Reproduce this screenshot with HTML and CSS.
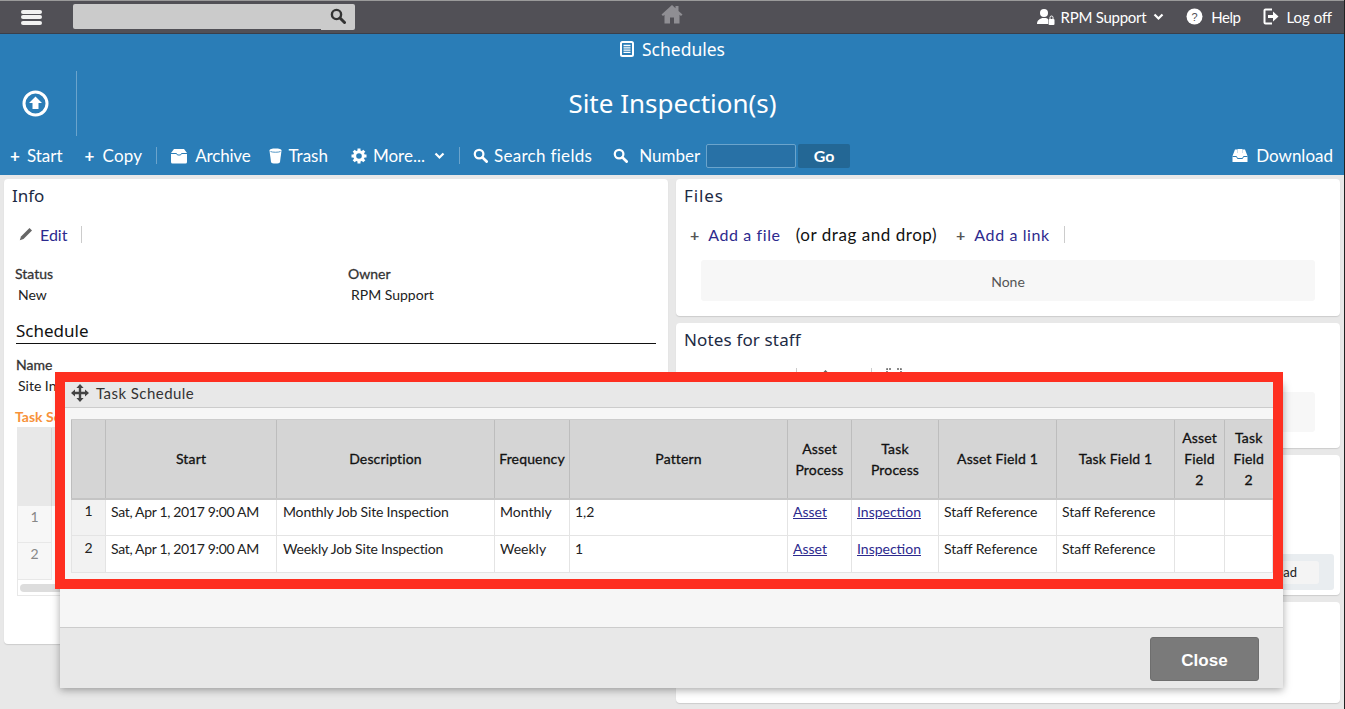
FILE: index.html
```html
<!DOCTYPE html>
<html lang="en">
<head>
<meta charset="utf-8">
<title>Site Inspection(s)</title>
<link rel="stylesheet" href="styles.css">
</head>
<body>
<header class="topbar">
  <button class="burger" aria-label="Menu"><span></span><span></span><span></span></button>
  <div class="searchbox">
    <div class="searchfield"></div>
    <div class="searchbtn"><svg width="16" height="16" viewBox="0 0 16 16"><circle cx="6.5" cy="6.5" r="4.6" fill="none" stroke="#333" stroke-width="2.4"/><path d="M10 10l4.5 4.5" stroke="#333" stroke-width="3" stroke-linecap="round"/></svg></div>
  </div>
  <div class="homewrap"><svg width="22" height="20" viewBox="0 0 22 20"><path d="M11 1 0.5 10.5 2 12l1.5-1.3V19.5h5.5v-6h4v6h5.500V10.700L20 12l1.500-1.500L17.500 7V2h-3v2.300z" fill="#8f8e93"/></svg></div>
  <nav class="usernav">
    <span class="navitem user"><svg width="18" height="18" viewBox="0 0 18 18"><circle cx="7" cy="5" r="4" fill="#fff"/><path d="M0 16c0-4 3-5 5-6h4c1 .3 1.500.7 2 1v5z" fill="#fff"/><rect x="11.500" y="11" width="6" height="6" rx="1" fill="#fff"/><path d="M13 11V9.500a1.500 1.500 0 0 1 3 0V11" fill="none" stroke="#fff"/></svg><span class="navtext">RPM Support</span><svg class="chev" width="11" height="8" viewBox="0 0 11 8"><path d="M1.500 1.500 5.500 5.500 9.500 1.500" fill="none" stroke="#fff" stroke-width="2.200"/></svg></span>
    <span class="navitem help"><svg width="17" height="17" viewBox="0 0 17 17"><circle cx="8.500" cy="8.500" r="8" fill="#fff"/><text x="8.500" y="12.500" class="qmark">?</text></svg><span class="navtext">Help</span></span>
    <span class="navitem logoff"><svg width="16" height="17" viewBox="0 0 16 17"><path d="M9 1.500H2.500a1 1 0 0 0-1 1v12a1 1 0 0 0 1 1H9" fill="none" stroke="#fff" stroke-width="2"/><path d="M5 7h5V3.500L15.500 8.500 10 13.500V10H5z" fill="#fff"/></svg>Log off</span>
  </nav>
</header>

<section class="band">
  <div class="crumb"><svg width="14" height="16" viewBox="0 0 14 16"><rect x="1" y="1" width="12" height="14" rx="1.500" fill="none" stroke="#fff" stroke-width="2"/><path d="M3.500 4.500h7M3.500 6.800h7M3.500 9.100h7M3.500 11.400h7" stroke="#fff" stroke-width="1.300"/></svg><span>Schedules</span></div>
  <div class="titlerow">
    <div class="upcell"><svg width="27" height="27" viewBox="0 0 27 27"><circle cx="13.500" cy="13.500" r="11.500" fill="none" stroke="#fff" stroke-width="3"/><path d="M13.500 6.500 20 13h-3.500v6h-6v-6H7z" fill="#fff"/></svg></div>
    <h1>Site Inspection(s)</h1>
  </div>
  <div class="toolbar">
    <span class="tool t-start"><b class="plus">+</b>Start</span>
    <span class="tool t-copy"><b class="plus">+</b>Copy</span>
    <i class="tsep"></i>
    <span class="tool t-archive"><svg width="18" height="16" viewBox="0 0 18 16"><path d="M4 1h10l3 4v9a1.500 1.500 0 0 1-1.500 1.500h-13A1.500 1.500 0 0 1 1 14V5z" fill="#fff"/><path d="M1 5.500h5.500l1 1.500h3l1-1.500H17" fill="none" stroke="#2a7db7"/></svg>Archive</span>
    <span class="tool t-trash"><svg width="13" height="16" viewBox="0 0 13 16"><path d="M.5 2.500C.5 1 3 .5 6.500.5s6 .5 6 2L11 14c-.2 1-2 1.500-4.500 1.500S2.200 15 2 14z" fill="#fff"/><path d="M1.500 3.500c2 1 8 1 10 0" fill="none" stroke="#2a7db7" stroke-width=".8"/></svg>Trash</span>
    <span class="tool t-more"><svg width="16" height="16" viewBox="0 0 16 16"><circle cx="8" cy="8" r="4.300" fill="none" stroke="#fff" stroke-width="3"/><path d="M8 0.500v3M8 12.500v3M.5 8h3M12.500 8h3M2.700 2.700l2.100 2.100M11.200 11.200l2.100 2.100M2.700 13.300l2.100-2.100M11.200 4.800l2.100-2.100" stroke="#fff" stroke-width="3"/></svg>More...<svg class="chev" width="11" height="8" viewBox="0 0 11 8"><path d="M1.500 1.500 5.500 5.500 9.500 1.500" fill="none" stroke="#fff" stroke-width="2.200"/></svg></span>
    <i class="tsep t-sep2"></i>
    <span class="tool t-sf"><svg width="15" height="15" viewBox="0 0 16 16"><circle cx="6.500" cy="6.500" r="4.600" fill="none" stroke="#fff" stroke-width="2.400"/><path d="M10 10l4.500 4.500" stroke="#fff" stroke-width="3" stroke-linecap="round"/></svg>Search fields</span>
    <span class="tool t-num"><svg width="15" height="15" viewBox="0 0 16 16"><circle cx="6.500" cy="6.500" r="4.600" fill="none" stroke="#fff" stroke-width="2.400"/><path d="M10 10l4.500 4.500" stroke="#fff" stroke-width="3" stroke-linecap="round"/></svg>Number</span>
    <div class="numinput"></div>
    <div class="gobtn">Go</div>
    <span class="tool t-dl"><svg width="16" height="15" viewBox="0 0 16 15"><path d="M3 1.500h2.500V5h5V1.500H13l2.500 6.500v6H.5V8z" fill="#fff"/><path d="M.5 8.500h4l1 2h5l1-2h4" fill="none" stroke="#2a7db7" stroke-width="1"/><path d="M5.500 1h5v4.500H13L8 9.500 3 5.500h2.500z" fill="#fff"/></svg>Download</span>
  </div>
</section>

<main class="content">
  <article class="card card-info">
    <h2>Info</h2>
    <div class="actions act-info">
      <svg width="14" height="14" viewBox="0 0 14 14"><path d="M10.500 1 13 3.500 4.500 12 .8 13.200 2 9.500z" fill="#666"/></svg>
      <a class="act">Edit</a><i class="asep"></i>
    </div>
    <div class="fields">
      <div><div class="flabel">Status</div><div class="fvalue">New</div></div>
      <div><div class="flabel">Owner</div><div class="fvalue">RPM Support</div></div>
    </div>
    <h3>Schedule</h3>
    <div class="flabel name">Name</div>
    <div class="fvalue nameval">Site Inspection(s)</div>
    <div class="tasklabel">Task Schedule</div>
    <div class="subtable">
      <div class="subhead"><div class="subcorner"></div></div>
      <div class="subrow"><span>1</span></div>
      <div class="subrow"><span>2</span></div>
      <div class="subscroll"><div class="thumb"></div></div>
    </div>
  </article>
  <div class="rightcol">
    <article class="card card-files">
      <h2>Files</h2>
      <div class="actions act-files">
        <span class="gplus">+</span><a class="act">Add a file</a>
        <span class="drag">(or drag and drop)</span>
        <span class="gplus second">+</span><a class="act">Add a link</a><i class="asep"></i>
      </div>
      <div class="nonebox">None</div>
    </article>
    <article class="card card-notes">
      <h2>Notes for staff</h2>
      <div class="actions act-notes">
        <span class="gplus">+</span><a class="act">Add item</a><svg class="nchev" width="10" height="8" viewBox="0 0 10 8"><path d="M1 1.500 5 5.500 9 1.500" fill="none" stroke="#777" stroke-width="2"/></svg><i class="asep one"></i>
        <svg class="npen" width="14" height="14" viewBox="0 0 14 14"><path d="M10.500 1 13 3.500 4.500 12 .8 13.200 2 9.500z" fill="#666"/></svg><a class="act">Edit</a><i class="asep two"></i>
        <svg class="nexp" width="16" height="16" viewBox="0 0 16 16"><path d="M1 5V1h4M11 1h4v4M15 11v4h-4M5 15H1v-4" fill="none" stroke="#666" stroke-width="1.500" stroke-dasharray="2 1"/></svg><a class="act">Expand</a>
      </div>
      <div class="notebox"></div>
    </article>
    <article class="card card-third">
      <div class="uploadstrip"><span class="uploadbtn">Upload</span></div>
    </article>
    <article class="card card-fourth"></article>
  </div>
</main>

<div class="modal">
  <div class="modalhead">
    <svg width="18" height="18" viewBox="0 0 18 18"><path d="M9 3v12M3 9h12" stroke="#444" stroke-width="2.400"/><path d="M9 0l3.600 4H5.400zM9 18l3.600-4H5.400zM0 9l4-3.600v7.200zM18 9l-4-3.600v7.200z" fill="#444"/></svg>
    <span>Task Schedule</span>
  </div>
  <div class="modalbody">
    <table class="grid">
      <colgroup><col class="c0"><col class="c1"><col class="c2"><col class="c3"><col class="c4"><col class="c5"><col class="c6"><col class="c7"><col class="c8"><col class="c9"><col class="c10"></colgroup>
      <thead>
        <tr><th></th><th>Start</th><th>Description</th><th>Frequency</th><th>Pattern</th><th>Asset<br>Process</th><th>Task<br>Process</th><th>Asset Field 1</th><th>Task Field 1</th><th>Asset Field 2</th><th>Task Field 2</th></tr>
      </thead>
      <tbody>
        <tr><td class="num">1</td><td class="date">Sat, Apr 1, 2017 9:00 AM</td><td class="desc">Monthly Job Site Inspection</td><td>Monthly</td><td>1,2</td><td><a>Asset</a></td><td><a>Inspection</a></td><td>Staff Reference</td><td>Staff Reference</td><td></td><td></td></tr>
        <tr><td class="num">2</td><td class="date">Sat, Apr 1, 2017 9:00 AM</td><td class="desc">Weekly Job Site Inspection</td><td>Weekly</td><td>1</td><td><a>Asset</a></td><td><a>Inspection</a></td><td>Staff Reference</td><td>Staff Reference</td><td></td><td></td></tr>
      </tbody>
    </table>
  </div>
  <div class="modalfoot"><button class="closebtn">Close</button></div>
</div>
<div class="redframe"></div>
</body>
</html>
```
FILE: styles.css
```css
* { box-sizing: border-box; }
html, body { margin: 0; height: 709px; overflow: hidden; }
body { background: #e8e8e8; font-family: Lato, "Liberation Sans", sans-serif; font-size: 14px; color: #222; position: relative; }
body::after { content: ""; position: absolute; right: 0; top: 0; bottom: 0; width: 1px; background: #222; }

/* top bar */
.topbar { height: 34px; background: #515056; border-top: 1px solid #9a9a9a; border-bottom: 1px solid #3a3f4a; display: flex; align-items: center; position: relative; color: #fff; }
.burger { width: 21px; height: 15px; margin-left: 21px; padding: 0; background: none; border: 0; display: flex; flex-direction: column; justify-content: space-between; }
.burger span { display: block; height: 4px; border-radius: 2px; background: #f2f2f2; }
.searchbox { margin-left: 31px; width: 282px; height: 26px; display: flex; }
.searchfield { flex: 1; height: 25px; background: #cbcbcb; border-radius: 2px 0 0 2px; }
.searchbtn { width: 34px; background: #cbcbcb; border-radius: 0 2px 2px 0; display: flex; align-items: center; justify-content: center; padding-bottom: 2px; }
.homewrap { position: absolute; left: 661px; top: 3px; line-height: 0; }
.usernav { margin-left: auto; margin-right: 13px; display: flex; align-items: center; font-size: 15px; padding-bottom: 1px; }
.navitem { display: flex; align-items: center; }
.navitem svg { margin-right: 6px; }
.navitem .chev { margin: 1px 0 0 7px; }
.user .navtext { letter-spacing: -.27px; }
.help { margin-left: 22px; }
.help svg { margin-right: 8px; }
.help .navtext { letter-spacing: -.5px; }
.logoff { margin-left: 23px; }
.logoff svg { margin-right: 7px; }
.qmark { font-size: 11px; fill: #515056; text-anchor: middle; font-family: "Liberation Sans", sans-serif; }

/* blue band */
.band { height: 141px; background: #2a7db7; color: #fff; display: flex; flex-direction: column; }
.crumb { height: 30px; display: flex; align-items: center; justify-content: center; gap: 8px; font: 17.500px "Noto Sans", sans-serif; }
.titlerow { height: 65px; margin-top: 7px; display: flex; align-items: center; position: relative; }
.upcell { width: 77px; height: 65px; border-right: 1px solid #6ba4cc; display: flex; align-items: center; justify-content: center; padding-right: 6px; }
.titlerow h1 { margin: 0 0 2px; position: absolute; left: 0; right: 0; text-align: center; font: 400 26px "Noto Sans", sans-serif; }
.toolbar { height: 39px; display: flex; align-items: center; font-size: 17px; padding: 0 12px 0 10px; }
.tool { display: flex; align-items: center; white-space: nowrap; }
.tool svg { margin-right: 8px; }
.plus { font-weight: 700; margin-right: 7px; }
.t-copy { margin-left: 22px; letter-spacing: .2px; }
.t-copy .plus { margin-right: 8px; }
.tsep { width: 1px; height: 17px; background: #6ba4cc; margin: 0 13px 0 14px; }
.t-archive svg { margin-right: 7px; }
.t-archive { letter-spacing: -.2px; }
.t-trash { margin-left: 19px; }
.t-trash svg { margin-right: 6px; }
.t-more { margin-left: 23px; }
.t-more svg { margin-right: 6px; }
.t-more .chev { margin: 1px 0 0 9px; }
.t-sep2 { margin: 0 13px 0 14px; }
.t-sf { letter-spacing: .3px; }
.t-sf svg { margin-right: 6px; }
.t-num { margin-left: 21px; }
.t-num svg { margin-right: 11px; }
.numinput { width: 90px; height: 24px; margin-left: 6px; background: #2871a6; border: 1px solid #6ba4cc; border-radius: 2px; }
.gobtn { width: 52px; height: 24px; margin-left: 2px; background: #236795; border-radius: 2px; display: flex; align-items: center; justify-content: center; font-size: 16px; font-weight: 700; }
.t-dl { margin-left: auto; }

/* content */
.content { display: flex; gap: 8px; padding: 4px 5px 0 4px; align-items: flex-start; }
.card { background: #fff; border-radius: 4px; box-shadow: 0 1px 1px #ccc; position: relative; }
.card h2 { margin: 0; font: 400 17px/24px "Noto Sans", sans-serif; color: #1c2a44; }
.card-files h2 { letter-spacing: .9px; }
.card-notes h2 { letter-spacing: .15px; }
.card-info { width: 664px; height: 465px; padding: 5px 8px; }
.rightcol { flex: 1; display: flex; flex-direction: column; gap: 7px; }
.card-files { height: 137px; padding: 5px 8px; }
.card-notes { height: 125px; padding: 5px 8px; }
.card-third { height: 140px; }
.card-fourth { height: 101px; }
.actions { display: flex; align-items: center; font-size: 16px; height: 22px; margin-top: 15px; }
.act { color: #2d2a8e; }
.asep { width: 1px; height: 17px; background: #ccc; margin-left: 14px; }
.act-info { padding-left: 7px; }
.act-info svg { margin-right: 7px; }
.act-files, .act-notes { padding-left: 6px; letter-spacing: .6px; }
.gplus { color: #555; font-weight: 700; margin-right: 9px; letter-spacing: 0; }
.drag { margin-left: 15px; color: #111; font-size: 17px; letter-spacing: .55px; }
.gplus.second { margin-left: 19px; }
.nonebox { margin: 15px 17px 0; height: 41px; padding-top: 2px; background: #f7f7f7; border-radius: 3px; display: flex; align-items: center; justify-content: center; font-size: 14px; color: #555; }
.act-notes { margin-top: 13px; }
.nchev { margin-left: 4px; }
.npen { margin: 0 6px 0 18px; }
.nexp { margin: 0 10px 0 14px; }
.asep.one { margin-left: 5px; }
.asep.two { margin-left: 6px; }
.notebox { position: absolute; left: 25px; right: 25px; top: 69px; height: 40px; background: #f7f7f7; border-radius: 3px; }
.uploadstrip { position: absolute; left: 25px; right: 6px; top: 99px; height: 36px; background: #e9edf0; border-radius: 3px; display: flex; justify-content: flex-end; align-items: center; padding-right: 15px; }
.uploadbtn { background: #f4f4f4; height: 23px; padding-right: 22px; line-height: 23px; border-radius: 3px; font-size: 13px; color: #222; width: 80px; text-align: right; }
.fields { display: grid; grid-template-columns: 333px 1fr; margin-top: 19px; padding-left: 3px; }
.flabel { font-size: 14px; color: #333; line-height: 20px; -webkit-text-stroke: .3px #333; }
.fvalue { font-size: 14px; color: #222; line-height: 20px; padding: 1px 0 0 3px; }
.card-info h3 { margin: 14px 0 0 4px; font: 400 17px/24px "Noto Sans", sans-serif; color: #111; border-bottom: 1px solid #111; width: 640px; }
.flabel.name { margin: 11px 0 0 4px; }
.nameval { margin-left: 3px; }
.tasklabel { margin: 11px 0 0 3px; color: #f7923a; font-weight: 700; font-size: 14px; line-height: 20px; }
.subtable { margin: 0 0 0 5px; width: 640px; height: 169px; border: 1px solid #e8e8e8; }
.subhead { height: 78px; background: #e8e8e8; }
.subcorner { width: 34px; height: 78px; border-right: 1px solid #d5d5d5; }
.subrow { height: 37px; width: 34px; background: #f7f7f7; border-bottom: 1px solid #e8e8e8; border-right: 1px solid #e8e8e8; display: flex; justify-content: center; padding-top: 2px; color: #888; }
.subscroll { padding: 4px 2px; }
.thumb { height: 8px; background: #ddd; border-radius: 4px; }

/* modal */
.modal { position: absolute; left: 60px; top: 382px; width: 1223px; height: 306px; background: #f6f6f6; box-shadow: 0 2px 8px rgba(0,0,0,.35); display: flex; flex-direction: column; }
.modalhead { height: 26px; background: #e8e8e8; border-bottom: 1px solid #ccc; display: flex; align-items: center; gap: 7px; padding: 0 0 4px 11px; font-size: 15px; letter-spacing: .45px; color: #333; flex: none; }
.modalbody { flex: 1; padding: 11px 11px 0 11px; }
.grid { border-collapse: collapse; table-layout: fixed; width: 1201px; font-size: 14px; }
.c0 { width: 34px; } .c1 { width: 171px; } .c2 { width: 218px; } .c3 { width: 75px; } .c4 { width: 218px; } .c5 { width: 64px; } .c6 { width: 87px; } .c7 { width: 118px; } .c8 { width: 118px; } .c9 { width: 50px; } .c10 { width: 48px; }
.grid th { height: 79px; background: #d5d5d5; font-weight: 400; font-size: 14px; letter-spacing: .15px; -webkit-text-stroke: .3px #111; line-height: 21px; color: #111; text-align: center; padding: 0 4px; border-left: 1px solid #bdbdbd; border-top: 1px solid #ccc; border-bottom: 2px solid #c4c4c4; }
.grid td { height: 37px; background: #fff; border: 1px solid #e4e4e4; border-top: 0; vertical-align: top; padding: 2px 5px 0; line-height: 20px; color: #222; white-space: nowrap; }
.grid tr + tr td { padding-top: 3px; }
.grid td.num { background: #f2f2f2; text-align: center; padding: 1px 0 0 0; }
.grid tr + tr td.num { padding-top: 2px; }
.grid td.date { letter-spacing: -.33px; }
.grid td.desc { letter-spacing: -.17px; padding-left: 6px; }
.grid a { color: #2d2a8e; text-decoration: underline; }
.modalfoot { height: 61px; flex: none; background: #e8e8e8; border-top: 1px solid #ccc; display: flex; justify-content: flex-end; padding: 9px 24px 0 0; }
.closebtn { width: 109px; height: 44px; padding-top: 4px; background: #7a7a7a; color: #fff; border: 1px solid #6e6e6e; border-radius: 3px; font: 700 17px "Liberation Sans", sans-serif; }

/* annotation */
.redframe { position: absolute; left: 55px; top: 372px; width: 1228px; height: 217px; border: 10px solid #fe2f20; pointer-events: none; }
```
